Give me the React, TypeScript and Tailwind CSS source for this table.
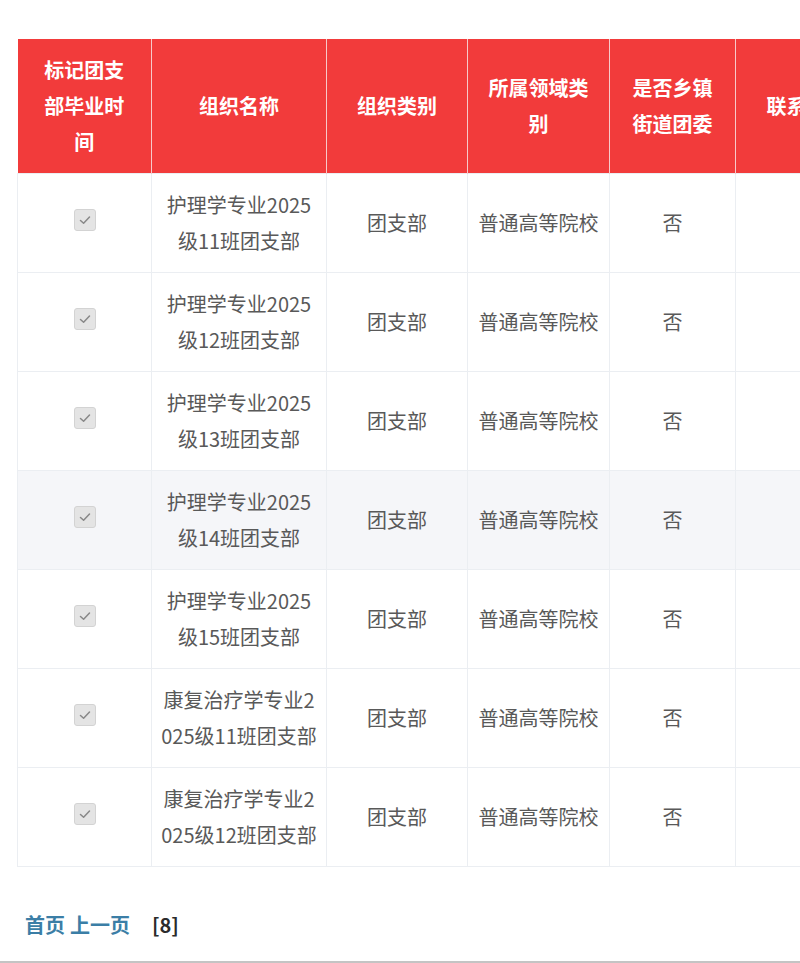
import React from 'react';

const rows = [
  { name: '护理学专业2025级11班团支部' },
  { name: '护理学专业2025级12班团支部' },
  { name: '护理学专业2025级13班团支部' },
  { name: '护理学专业2025级14班团支部', hover: true },
  { name: '护理学专业2025级15班团支部' },
  { name: '康复治疗学专业2025级11班团支部' },
  { name: '康复治疗学专业2025级12班团支部' },
];

const headers = ['标记团支部毕业时间', '组织名称', '组织类别', '所属领域类别', '是否乡镇街道团委', '联系电话'];
const widths = ['w-[134px]', 'w-[175px]', 'w-[141px]', 'w-[142px]', 'w-[126px]', 'w-[142px]'];

function CheckBox() {
  return (
    <span className="relative -top-[4px] inline-flex items-center justify-center w-[22px] h-[22px] rounded-[3px] border border-[#d3d3d3] bg-[#e4e4e4] align-middle">
      <svg width="14" height="14" viewBox="0 0 14 14" fill="none">
        <path d="M2.5 7.5 L5.6 10.3 L11.5 4" stroke="#888888" strokeWidth="1.5" strokeLinecap="round" strokeLinejoin="round" />
      </svg>
    </span>
  );
}

export default function App() {
  return (
    <div className="w-[800px] h-[963px] bg-white overflow-hidden flex flex-col border-b-2 border-[#c4c4c4] font-['Noto_Sans_CJK_SC','Noto_Sans',sans-serif]">
      <div className="pt-[39px] pl-[17px] overflow-hidden">
        <table className="table-fixed border-collapse w-[860px]">
          <colgroup>
            {widths.map((w, i) => (
              <col key={i} className={w} />
            ))}
          </colgroup>
          <thead>
            <tr className="h-[134px] bg-[#f23b3b]">
              {headers.map((h, i) => (
                <th
                  key={i}
                  className="px-[20px] text-[20px] leading-[36px] font-bold text-white text-center align-middle border-r border-[#f7c9c9]"
                >
                  {h}
                </th>
              ))}
            </tr>
          </thead>
          <tbody>
            {rows.map((r, i) => (
              <tr key={i} className={`h-[99px] ${r.hover ? 'bg-[#f5f6f9]' : 'bg-white'}`}>
                <td className="border border-[#ebeef2] text-center align-middle">
                  <CheckBox />
                </td>
                <td className="border border-[#ebeef2] px-[8px] text-center align-middle text-[20px] leading-[36px] text-[#595959] break-all">
                  {r.name}
                </td>
                <td className="border border-[#ebeef2] px-[8px] text-center align-middle text-[20px] leading-[36px] text-[#595959]">
                  团支部
                </td>
                <td className="border border-[#ebeef2] px-[8px] text-center align-middle text-[20px] leading-[36px] text-[#595959]">
                  普通高等院校
                </td>
                <td className="border border-[#ebeef2] px-[8px] text-center align-middle text-[20px] leading-[36px] text-[#595959]">
                  否
                </td>
                <td className="border border-[#ebeef2] px-[8px] text-center align-middle text-[20px] leading-[36px] text-[#595959]"></td>
              </tr>
            ))}
          </tbody>
        </table>
      </div>

      <div className="pl-[25px] mt-[44px] flex items-center text-[20px] leading-[28px] font-bold">
        <span className="text-[#3b7ea6]">首页</span>
        <span className="text-[#3b7ea6] ml-[5px]">上一页</span>
        <span className="text-[#2b2b2b] ml-[22px]">[8]</span>
      </div>
    </div>
  );
}
